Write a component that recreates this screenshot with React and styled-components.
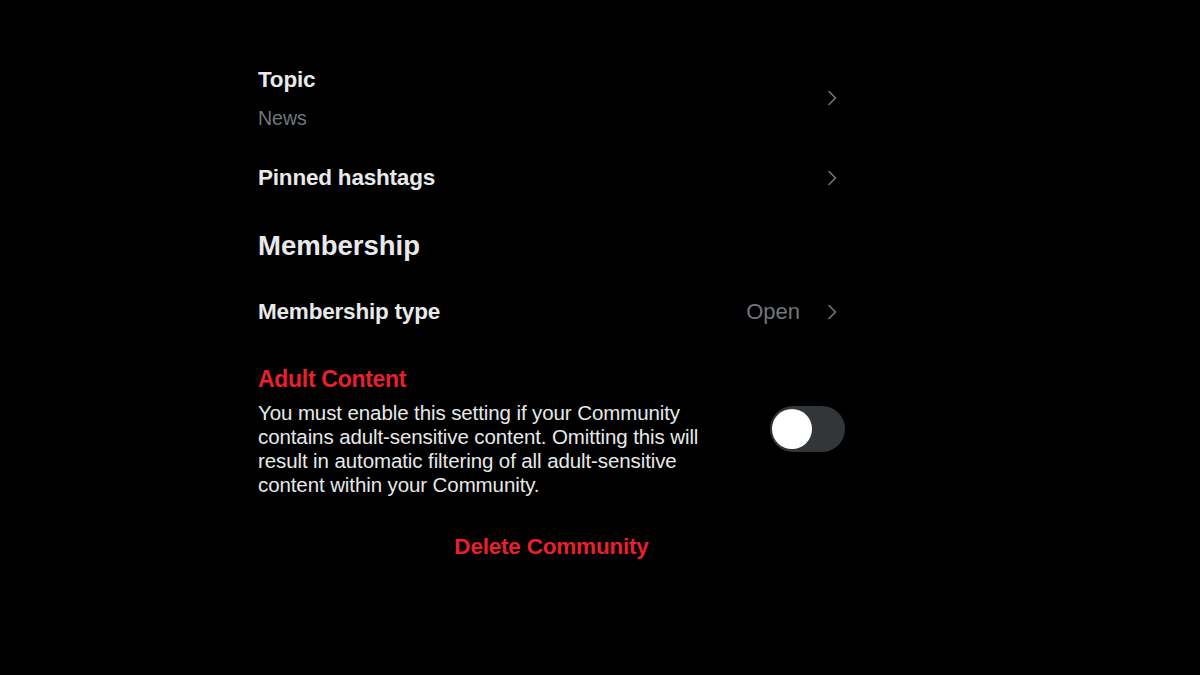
import styled, { createGlobalStyle } from "styled-components"

const GlobalStyle = createGlobalStyle`
  html, body {
    margin: 0;
    padding: 0;
    background: #000;
  }
  body {
    font-family: "Liberation Sans", Arial, sans-serif;
    -webkit-font-smoothing: antialiased;
  }
`;

const Chevron = () => (
    <ChevronBox>
        <svg width="20" height="20" viewBox="0 0 20 20" fill="none">
            <path d="M7 3.5 L13.5 10 L7 16.5" stroke="#71767b" strokeWidth="1.6" strokeLinecap="round" strokeLinejoin="round" />
        </svg>
    </ChevronBox>
);

const App = () => {
    return (
        <Page>
            <GlobalStyle />
            <Panel>
                <Row>
                    <RowText>
                        <Label>Topic</Label>
                        <Sub>News</Sub>
                    </RowText>
                    <Chevron />
                </Row>
                <Row>
                    <RowText>
                        <Label>Pinned hashtags</Label>
                    </RowText>
                    <Chevron />
                </Row>
                <Heading>Membership</Heading>
                <Row>
                    <RowText>
                        <Label>Membership type</Label>
                    </RowText>
                    <Value>Open</Value>
                    <Chevron />
                </Row>
                <ToggleRow>
                    <RowText>
                        <DangerTitle>Adult Content</DangerTitle>
                        <Description>
                            You must enable this setting if your Community<br />
                            contains adult-sensitive content. Omitting this will<br />
                            result in automatic filtering of all adult-sensitive<br />
                            content within your Community.
                        </Description>
                    </RowText>
                    <Switch>
                        <Knob />
                    </Switch>
                </ToggleRow>
                <DeleteButton>Delete Community</DeleteButton>
            </Panel>
        </Page>
    )
};

const Page = styled.div`
    min-height: 675px;
    background: #000;
    padding: 49px 0 0 240px;
    box-sizing: border-box;
`;

const Panel = styled.div`
    width: 623px;
    padding: 0 18px;
    box-sizing: border-box;
    display: flex;
    flex-direction: column;
`;

const Row = styled.div`
    display: flex;
    align-items: center;
    padding: 17px 0;
    gap: 8px;
`;

const RowText = styled.div`
    flex: 1;
    display: flex;
    flex-direction: column;
`;

const Label = styled.div`
    color: #e7e9ea;
    font-size: 22.5px;
    font-weight: 700;
    line-height: 28px;
    letter-spacing: -0.2px;
`;

const Sub = styled.div`
    color: #71767b;
    font-size: 19.5px;
    line-height: 24px;
    margin-top: 12px;
`;

const Value = styled.div`
    color: #71767b;
    font-size: 22px;
    line-height: 28px;
    margin-right: 14px;
`;

const ChevronBox = styled.div`
    width: 20px;
    height: 20px;
    display: flex;
    margin-right: 3px;
`;

const Heading = styled.div`
    color: #e7e9ea;
    font-size: 27.5px;
    font-weight: 700;
    line-height: 34px;
    padding: 20px 0 18px;
`;

const ToggleRow = styled(Row)`
    padding: 22px 0 17px;
    gap: 20px;
`;

const DangerTitle = styled.div`
    color: #e8202e;
    font-size: 23px;
    font-weight: 700;
    line-height: 28px;
    letter-spacing: -0.3px;
`;

const Description = styled.div`
    color: #e7e9ea;
    font-size: 20.5px;
    line-height: 24px;
    margin-top: 8px;
    letter-spacing: -0.1px;
    white-space: nowrap;
`;

const Switch = styled.div`
    width: 75px;
    height: 46px;
    border-radius: 23px;
    background: #333639;
    display: flex;
    align-items: center;
    padding: 0 2px;
    margin-bottom: 4px;
    box-sizing: border-box;
    flex-shrink: 0;
`;

const Knob = styled.div`
    width: 40px;
    height: 40px;
    border-radius: 50%;
    background: #fff;
`;

const DeleteButton = styled.div`
    color: #e8202e;
    font-size: 22.5px;
    font-weight: 700;
    line-height: 28px;
    text-align: center;
    padding: 19px 0 17px;
    letter-spacing: -0.2px;
`;

export default App
